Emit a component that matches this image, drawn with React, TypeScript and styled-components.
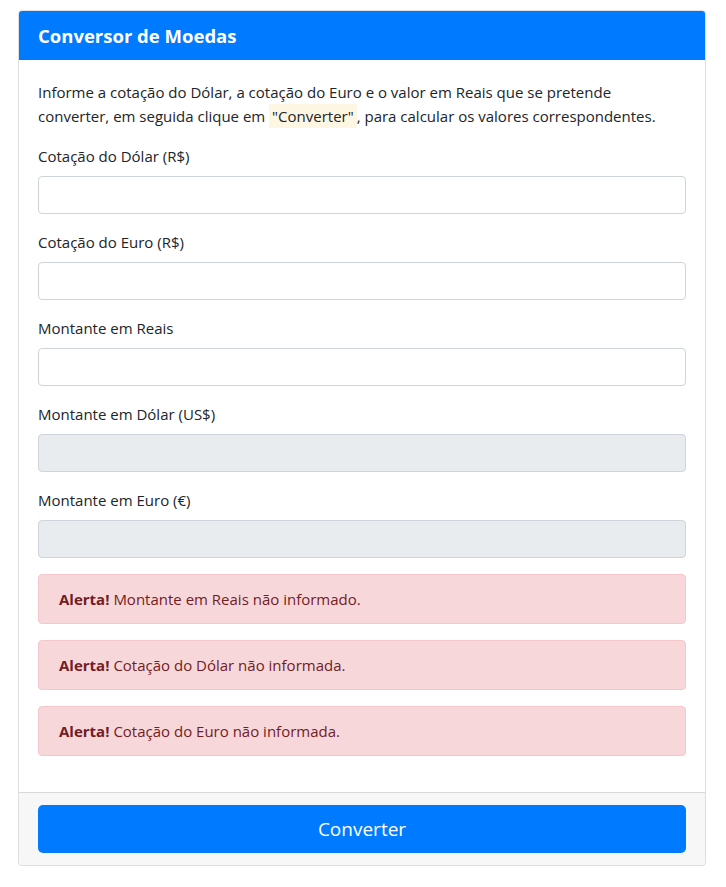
import React from 'react';
import styled, { createGlobalStyle } from 'styled-components';

const GlobalStyle = createGlobalStyle`
  * { box-sizing: border-box; }
  body {
    margin: 0;
    background: #fff;
    font-family: "Segoe UI", "Open Sans", "Noto Sans", sans-serif;
    font-size: 15px;
    line-height: 1.6;
    color: #212529;
  }
`;

const Page = styled.div`
  padding: 10px 20px 22px 18px;
`;

const Card = styled.div`
  display: flex;
  flex-direction: column;
  border: 1px solid rgba(0, 0, 0, 0.125);
  border-radius: 4px;
  background: #fff;
  overflow: hidden;
`;

const Header = styled.div`
  background: #007bff;
  color: #fff;
  height: 49px;
  padding: 0 19px;
  display: flex;
  align-items: center;
  font-size: 18.5px;
  font-weight: 700;
`;

const Body = styled.div`
  padding: 20px 19px 20px 19px;
`;

const Intro = styled.p`
  margin: 0 0 16px;
  line-height: 24px;
`;

const Code = styled.span`
  display: inline-block;
  background: #fdf6e3;
  line-height: 24px;
  padding: 0 3px;
`;

const Group = styled.div`
  display: flex;
  flex-direction: column;
  margin-bottom: 16px;
`;

const Label = styled.label`
  line-height: 24px;
  margin-bottom: 8px;
`;

const Input = styled.input<{ $readOnly?: boolean }>`
  height: 38px;
  width: 100%;
  border: 1px solid #ced4da;
  border-radius: 4px;
  padding: 6px 12px;
  font: inherit;
  background: ${(p) => (p.$readOnly ? '#e9ecef' : '#fff')};
  outline: none;
`;

const Alert = styled.div`
  background: #f8d7da;
  border: 1px solid #f5c6cb;
  color: #721c24;
  border-radius: 4px;
  padding: 12px 20px;
  line-height: 24px;
  margin-bottom: 16px;

  b {
    font-weight: 700;
  }
`;

const Footer = styled.div`
  background: #f7f7f7;
  border-top: 1px solid rgba(0, 0, 0, 0.125);
  padding: 12px 19px;
`;

const Button = styled.button`
  width: 100%;
  height: 48px;
  border: none;
  border-radius: 5px;
  background: #007bff;
  color: #fff;
  font-family: inherit;
  font-size: 19px;
  cursor: pointer;
`;

const fields = [
  { label: 'Cotação do Dólar (R$)' },
  { label: 'Cotação do Euro (R$)' },
  { label: 'Montante em Reais' },
  { label: 'Montante em Dólar (US$)', readOnly: true },
  { label: 'Montante em Euro (€)', readOnly: true },
];

const alerts = [
  'Montante em Reais não informado.',
  'Cotação do Dólar não informada.',
  'Cotação do Euro não informada.',
];

const App = () => {
  return (
    <>
      <GlobalStyle />
      <Page>
        <Card>
          <Header>Conversor de Moedas</Header>
          <Body>
            <Intro>
              Informe a cotação do Dólar, a cotação do Euro e o valor em Reais que se pretende
              converter, em seguida clique em <Code>"Converter"</Code>, para calcular os valores
              correspondentes.
            </Intro>
            {fields.map((f) => (
              <Group key={f.label}>
                <Label>{f.label}</Label>
                <Input $readOnly={f.readOnly} readOnly={f.readOnly} />
              </Group>
            ))}
            {alerts.map((a) => (
              <Alert key={a}>
                <b>Alerta!</b> {a}
              </Alert>
            ))}
          </Body>
          <Footer>
            <Button type="button">Converter</Button>
          </Footer>
        </Card>
      </Page>
    </>
  );
};

export default App;
